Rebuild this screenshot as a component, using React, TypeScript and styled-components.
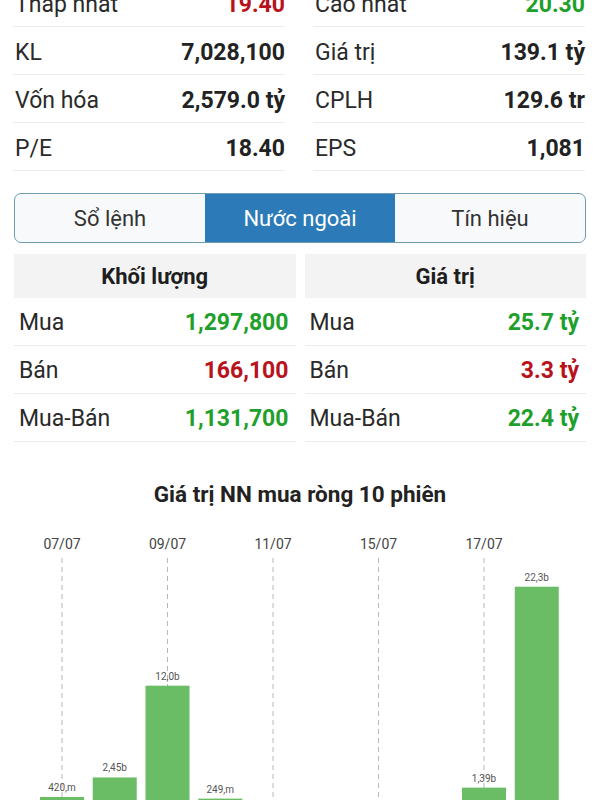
import styled, { createGlobalStyle } from 'styled-components'

const GlobalStyle = createGlobalStyle`
  html, body {
    margin: 0;
    padding: 0;
    background: #ffffff;
    overflow: hidden;
  }
  body {
    font-family: Roboto, "Noto Sans", "Liberation Sans", sans-serif;
    color: #222222;
  }
`;

const Page = styled.div`
  width: 600px;
  margin-top: -21px;
`;

const StatsGrid = styled.div`
  display: grid;
  grid-template-columns: 1fr 1fr;
  column-gap: 28px;
  padding: 0 15px 0 13px;
`;

const StatRow = styled.div`
  height: 47px;
  display: flex;
  align-items: center;
  justify-content: space-between;
  padding: 3px 0 0 2px;
  box-sizing: border-box;
  height: 48px;
  border-bottom: 1px solid #ececec;
  font-size: 23px;
`;

const Label = styled.span`
  color: #2a2a2a;
`;

type Tone = 'up' | 'down'

const Value = styled.span<{ tone?: Tone }>`
  font-weight: 700;
  color: ${p => (p.tone === 'up' ? '#1f9f2b' : p.tone === 'down' ? '#b8121c' : '#222222')};
`;

const Tabs = styled.div`
  display: grid;
  grid-template-columns: repeat(3, 1fr);
  margin: 22px 14px 0;
  height: 48px;
  border: 1.5px solid #6f9cb2;
  border-radius: 7px;
  overflow: hidden;
  background: #f7f9fa;
`;

const Tab = styled.div<{ active?: boolean }>`
  display: flex;
  align-items: center;
  justify-content: center;
  font-size: 22px;
  padding-top: 1px;
  color: ${p => (p.active ? '#ffffff' : '#333333')};
  background: ${p => (p.active ? '#2c7bb8' : 'transparent')};
`;

const ForeignGrid = styled.div`
  display: grid;
  grid-template-columns: 1fr 1fr;
  column-gap: 9px;
  padding: 11px 14px 0;
`;

const PanelHeader = styled.div`
  height: 44px;
  display: flex;
  align-items: center;
  justify-content: center;
  background: #f3f3f3;
  font-size: 22px;
  font-weight: 700;
  color: #1e1e1e;
`;

const PanelRow = styled.div`
  box-sizing: border-box;
  height: 48px;
  display: flex;
  align-items: center;
  justify-content: space-between;
  padding: 2px 7px 0 5px;
  border-bottom: 1px solid #ececec;
  font-size: 23px;
`;

const ChartTitle = styled.div`
  margin-top: 39px;
  line-height: 26px;
  text-align: center;
  font-size: 22.5px;
  font-weight: 700;
  color: #222222;
`;

const ChartSvg = styled.svg`
  display: block;
`;

const statsLeft: { label: string; value: string; tone?: Tone }[] = [
  { label: 'Thấp nhất', value: '19.40', tone: 'down' },
  { label: 'KL', value: '7,028,100' },
  { label: 'Vốn hóa', value: '2,579.0 tỷ' },
  { label: 'P/E', value: '18.40' },
];

const statsRight: { label: string; value: string; tone?: Tone }[] = [
  { label: 'Cao nhất', value: '20.30', tone: 'up' },
  { label: 'Giá trị', value: '139.1 tỷ' },
  { label: 'CPLH', value: '129.6 tr' },
  { label: 'EPS', value: '1,081' },
];

const volume: { label: string; value: string; tone: Tone }[] = [
  { label: 'Mua', value: '1,297,800', tone: 'up' },
  { label: 'Bán', value: '166,100', tone: 'down' },
  { label: 'Mua-Bán', value: '1,131,700', tone: 'up' },
];

const money: { label: string; value: string; tone: Tone }[] = [
  { label: 'Mua', value: '25.7 tỷ', tone: 'up' },
  { label: 'Bán', value: '3.3 tỷ', tone: 'down' },
  { label: 'Mua-Bán', value: '22.4 tỷ', tone: 'up' },
];

const sessions = [
  { date: '07/07', value: 0.42, text: '420,m' },
  { date: '08/07', value: 2.45, text: '2,45b' },
  { date: '09/07', value: 12.0, text: '12,0b' },
  { date: '10/07', value: 0.249, text: '249,m' },
  { date: '11/07', value: -1.2, text: '-1,2b' },
  { date: '14/07', value: -0.8, text: '-800,m' },
  { date: '15/07', value: -2.1, text: '-2,1b' },
  { date: '16/07', value: -0.5, text: '-500,m' },
  { date: '17/07', value: 1.39, text: '1,39b' },
  { date: '18/07', value: 22.3, text: '22,3b' },
];

const NetChart = () => {
  const baseY = 294
  const scale = 9.61
  const step = 52.75
  const barW = 44
  return (
    <ChartSvg width="600" height="330" viewBox="0 0 600 330">
      {sessions.map((s, i) => {
        const cx = 62 + i * step
        if (i % 2 !== 0) return null
        return (
          <g key={'grid' + s.date}>
            <text x={cx} y={42} textAnchor="middle" fontSize="14" fill="#444" fontFamily="Roboto, sans-serif">
              {s.date}
            </text>
            <line x1={cx} y1={51} x2={cx} y2={330} stroke="#b8b8b8" strokeWidth="1" strokeDasharray="5 4" />
          </g>
        )
      })}
      {sessions.map((s, i) => {
        const cx = 62 + i * step
        const h = Math.abs(s.value) * scale
        const y = s.value >= 0 ? baseY - h : baseY
        return (
          <g key={'bar' + s.date}>
            <rect x={cx - barW / 2} y={y} width={barW} height={Math.max(h, 1)} fill="#6abd65" />
            {s.value >= 0 && (
              <text x={cx} y={y - 6} textAnchor="middle" fontSize="10" fill="#555" fontFamily="Roboto, sans-serif">
                {s.text}
              </text>
            )}
          </g>
        )
      })}
    </ChartSvg>
  )
}

const App = () => {
  return (
    <>
      <GlobalStyle />
      <Page>
        <StatsGrid>
          <div>
            {statsLeft.map(s => (
              <StatRow key={s.label}>
                <Label>{s.label}</Label>
                <Value tone={s.tone}>{s.value}</Value>
              </StatRow>
            ))}
          </div>
          <div>
            {statsRight.map(s => (
              <StatRow key={s.label}>
                <Label>{s.label}</Label>
                <Value tone={s.tone}>{s.value}</Value>
              </StatRow>
            ))}
          </div>
        </StatsGrid>

        <Tabs>
          <Tab>Sổ lệnh</Tab>
          <Tab active>Nước ngoài</Tab>
          <Tab>Tín hiệu</Tab>
        </Tabs>

        <ForeignGrid>
          <div>
            <PanelHeader>Khối lượng</PanelHeader>
            {volume.map(r => (
              <PanelRow key={r.label}>
                <Label>{r.label}</Label>
                <Value tone={r.tone}>{r.value}</Value>
              </PanelRow>
            ))}
          </div>
          <div>
            <PanelHeader>Giá trị</PanelHeader>
            {money.map(r => (
              <PanelRow key={r.label}>
                <Label>{r.label}</Label>
                <Value tone={r.tone}>{r.value}</Value>
              </PanelRow>
            ))}
          </div>
        </ForeignGrid>

        <ChartTitle>Giá trị NN mua ròng 10 phiên</ChartTitle>
        <NetChart />
      </Page>
    </>
  )
}

export default App
